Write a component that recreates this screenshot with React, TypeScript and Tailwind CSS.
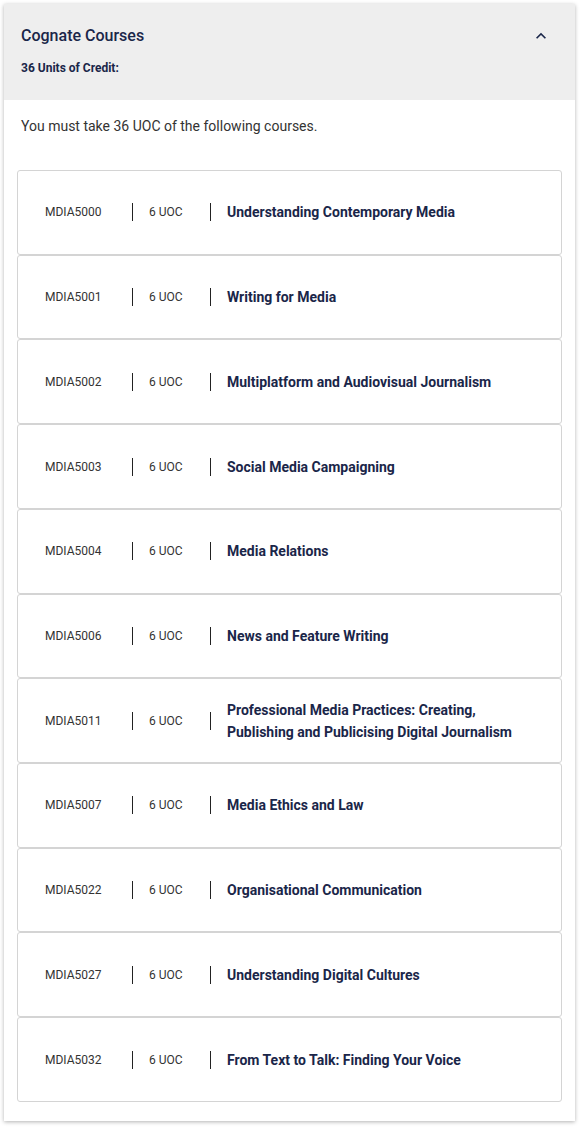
const courses: [string, string][] = [
  ["MDIA5000", "Understanding Contemporary Media"],
  ["MDIA5001", "Writing for Media"],
  ["MDIA5002", "Multiplatform and Audiovisual Journalism"],
  ["MDIA5003", "Social Media Campaigning"],
  ["MDIA5004", "Media Relations"],
  ["MDIA5006", "News and Feature Writing"],
  ["MDIA5011", "Professional Media Practices: Creating, Publishing and Publicising Digital Journalism"],
  ["MDIA5007", "Media Ethics and Law"],
  ["MDIA5022", "Organisational Communication"],
  ["MDIA5027", "Understanding Digital Cultures"],
  ["MDIA5032", "From Text to Talk: Finding Your Voice"],
];

export default function App() {
  return (
    <div className="min-h-[1137px] bg-white p-1 font-['Roboto',sans-serif]">
      <div className="w-[571px] bg-white shadow-[0_1px_4px_rgba(0,0,0,0.3)]">
        <div className="flex h-[96px] items-start justify-between bg-[#eeeeee] pl-[17px] pr-[24px] pt-[22px]">
          <div>
            <h2 className="text-[16px] font-medium leading-5 text-[#1a2649]">Cognate Courses</h2>
            <p className="mt-[14px] text-[12px] font-bold leading-4 text-[#1a2649]">36 Units of Credit:</p>
          </div>
          <svg viewBox="0 0 24 24" className="h-[20px] w-[20px] fill-[#1a2649]">
            <path d="M7.41 15.41 12 10.83l4.59 4.58L18 14l-6-6-6 6z" />
          </svg>
        </div>
        <div className="px-[13px] pb-[19px] pt-[16px]">
          <p className="pl-[4px] text-[14px] leading-5 text-[#333]">You must take 36 UOC of the following courses.</p>
          <div className="mt-[34px] flex flex-col">
            {courses.map(([code, title]) => (
              <div
                key={code}
                className="flex h-[84.73px] items-center rounded-[3px] border border-[#d4d4d4] bg-white pl-[27px] pr-4"
              >
                <span className="w-[87px] shrink-0 text-[12px] leading-4 text-[#333]">{code}</span>
                <span className="w-[78px] shrink-0 border-l border-[#222] pl-4 text-[12px] leading-[18px] text-[#333]">
                  6 UOC
                </span>
                <div className="flex items-center">
                  <span className="h-[18px] shrink-0 border-l border-[#222]" />
                  <span className="max-w-[310px] pl-4 text-[14px] font-bold leading-[22px] text-[#1a2649]">{title}</span>
                </div>
              </div>
            ))}
          </div>
        </div>
      </div>
    </div>
  );
}
